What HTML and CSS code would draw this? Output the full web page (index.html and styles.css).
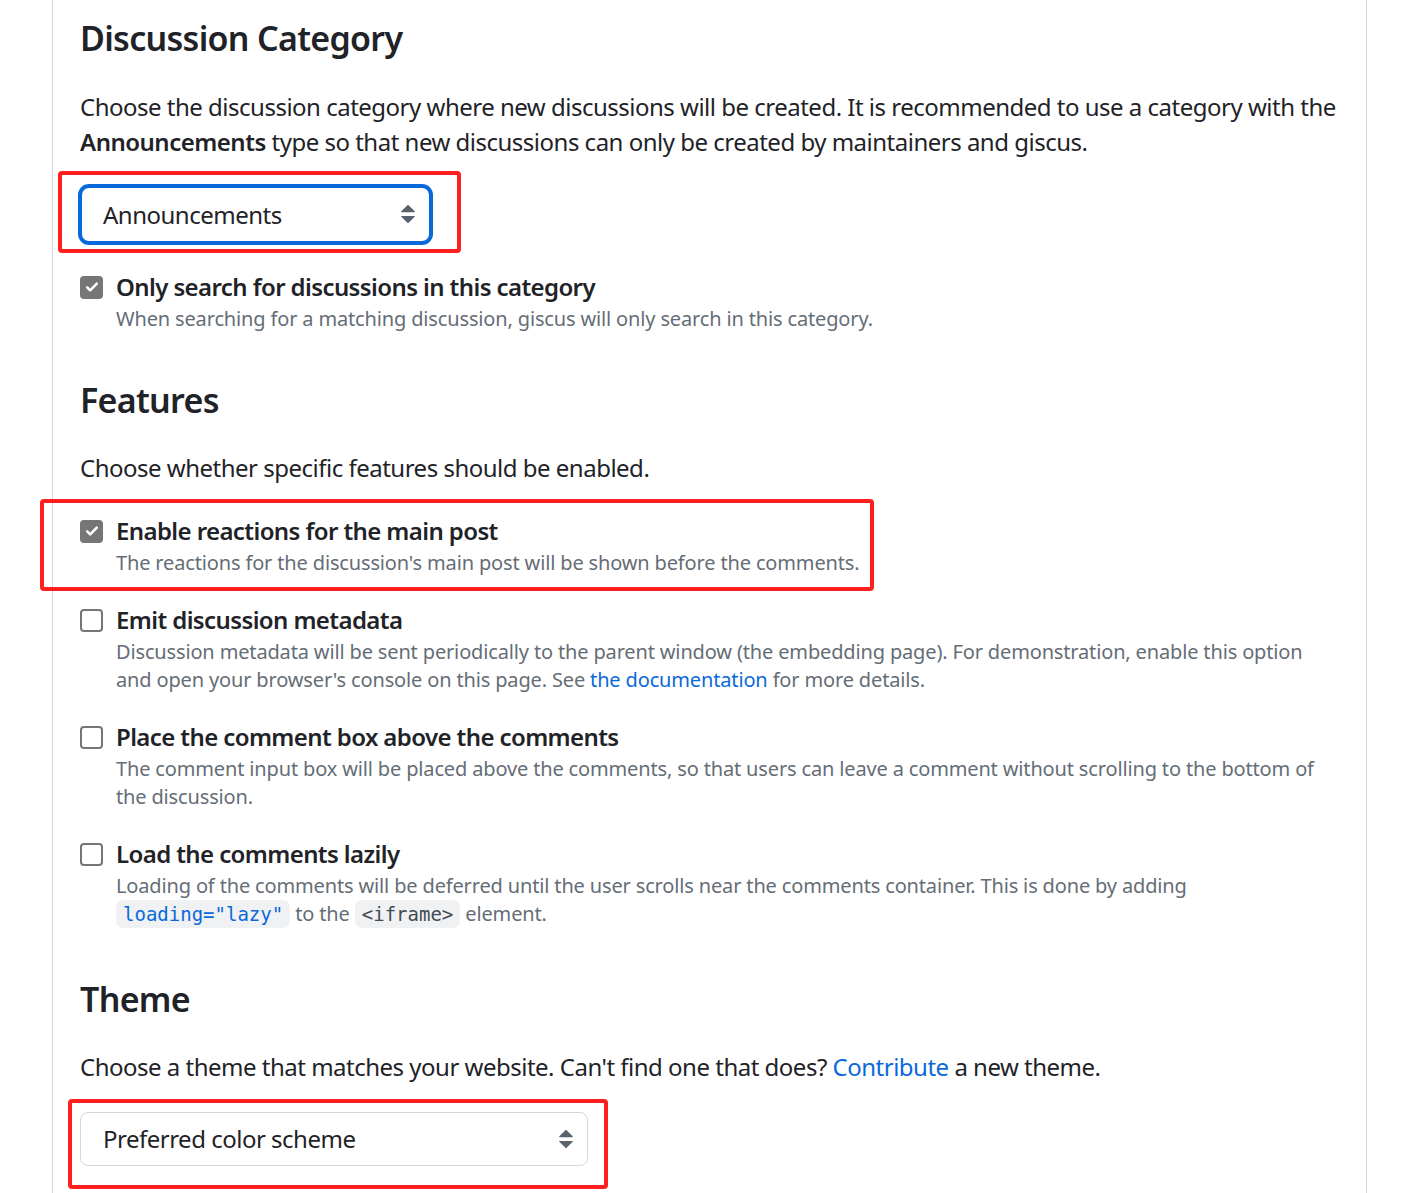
FILE: index.html
```html
<!DOCTYPE html>
<html lang="en">
<head>
<meta charset="utf-8">
<title>giscus configuration</title>
<link rel="stylesheet" href="styles.css">
</head>
<body>
<div class="page">
  <section class="sec">
    <h2 class="title">Discussion Category</h2>
    <p class="lead">Choose the discussion category where new discussions will be created. It is recommended to use a category with the <strong>Announcements</strong> type so that new discussions can only be created by maintainers and giscus.</p>
    <div class="select select-focus select-cat">
      <span class="select-text">Announcements</span>
      <svg class="chev" viewBox="0 0 16 16" width="30" height="30"><path d="M4.427 9.427l3.396 3.396a.25.25 0 00.354 0l3.396-3.396A.25.25 0 0011.396 9H4.604a.25.25 0 00-.177.427zM4.427 6.573l3.396-3.396a.25.25 0 01.354 0l3.396 3.396A.25.25 0 0111.396 7H4.604a.25.25 0 01-.177-.427z"/></svg>
    </div>
    <div class="opt opt-first">
      <span class="cb cb-on"><svg viewBox="0 0 16 16" width="16" height="16"><path d="M3.2 8.4l3 3 6.6-6.8" /></svg></span>
      <div class="opt-body">
        <div class="opt-label">Only search for discussions in this category</div>
        <div class="opt-desc">When searching for a matching discussion, giscus will only search in this category.</div>
      </div>
    </div>
  </section>

  <section class="sec sec-features">
    <h2 class="title">Features</h2>
    <p class="lead">Choose whether specific features should be enabled.</p>
    <div class="opts">
      <div class="opt">
        <span class="cb cb-on"><svg viewBox="0 0 16 16" width="16" height="16"><path d="M3.2 8.4l3 3 6.6-6.8" /></svg></span>
        <div class="opt-body">
          <div class="opt-label">Enable reactions for the main post</div>
          <div class="opt-desc">The reactions for the discussion's main post will be shown before the comments.</div>
        </div>
      </div>
      <div class="opt">
        <span class="cb"></span>
        <div class="opt-body">
          <div class="opt-label">Emit discussion metadata</div>
          <div class="opt-desc">Discussion metadata will be sent periodically to the parent window (the embedding page). For demonstration, enable this option and open your browser's console on this page. See <a href="#">the documentation</a> for more details.</div>
        </div>
      </div>
      <div class="opt">
        <span class="cb"></span>
        <div class="opt-body">
          <div class="opt-label">Place the comment box above the comments</div>
          <div class="opt-desc">The comment input box will be placed above the comments, so that users can leave a comment without scrolling to the bottom of the discussion.</div>
        </div>
      </div>
      <div class="opt">
        <span class="cb"></span>
        <div class="opt-body">
          <div class="opt-label">Load the comments lazily</div>
          <div class="opt-desc">Loading of the comments will be deferred until the user scrolls near the comments container. This is done by adding <code class="code code-blue">loading="lazy"</code> to the <code class="code">&lt;iframe&gt;</code> element.</div>
        </div>
      </div>
    </div>
  </section>

  <section class="sec sec-theme">
    <h2 class="title">Theme</h2>
    <p class="lead">Choose a theme that matches your website. Can't find one that does? <a href="#">Contribute</a> a new theme.</p>
    <div class="select select-theme">
      <span class="select-text">Preferred color scheme</span>
      <svg class="chev" viewBox="0 0 16 16" width="30" height="30"><path d="M4.427 9.427l3.396 3.396a.25.25 0 00.354 0l3.396-3.396A.25.25 0 0011.396 9H4.604a.25.25 0 00-.177.427zM4.427 6.573l3.396-3.396a.25.25 0 01.354 0l3.396 3.396A.25.25 0 0111.396 7H4.604a.25.25 0 01-.177-.427z"/></svg>
    </div>
  </section>
</div>

<div class="mark mark-1"></div>
<div class="mark mark-2"></div>
<div class="mark mark-3"></div>
</body>
</html>
```

FILE: styles.css
```css
* { box-sizing: border-box; }
html, body { margin: 0; background: #ffffff; }
body {
  position: relative;
  width: 1401px;
  height: 1193px;
  overflow: hidden;
  font-family: "Noto Sans", "Segoe UI", sans-serif;
  color: #1f2328;
}
.page {
  margin-left: 52px;
  width: 1315px;
  min-height: 1193px;
  border-left: 1px solid #d0d7de;
  border-right: 1px solid #d0d7de;
  padding: 17px 24px 0 27px;
}
.title {
  margin: 0;
  font-size: 34px;
  line-height: 42px;
  font-weight: 600;
  letter-spacing: -0.7px;
}
.lead {
  margin: 29.5px 0 0;
  font-size: 24px;
  line-height: 35px;
  letter-spacing: -0.5px;
}
.lead strong { font-weight: 600; }
a { color: #0969da; text-decoration: none; }

.sec-features { margin-top: 46px; }
.sec-theme { margin-top: 50px; }

.select {
  display: flex;
  align-items: center;
  justify-content: space-between;
  font-size: 24px;
  letter-spacing: -0.5px;
  background: #fff;
}
.select-cat {
  margin-top: 27px;
  width: 351px;
  height: 57px;
  border: 2px solid #0969da;
  border-radius: 9px;
  box-shadow: 0 0 0 2px #0969da;
  padding: 0 6px 0 21px;
}
.select-theme {
  margin-top: 27.5px;
  width: 508px;
  height: 54px;
  border: 1px solid #d0d7de;
  border-radius: 8px;
  padding: 0 6px 0 22px;
}
.chev { fill: #59636e; flex: none; }

.opts {
  display: flex;
  flex-direction: column;
  gap: 27px;
  margin-top: 29.5px;
}
.opt {
  display: flex;
  align-items: flex-start;
  gap: 13px;
}
.opt-first { margin-top: 28px; }
.cb {
  flex: none;
  width: 23px;
  height: 23px;
  margin-top: 5px;
  border: 2px solid #767676;
  border-radius: 4px;
  background: #fff;
  display: flex;
  align-items: center;
  justify-content: center;
}
.cb-on { background: #767676; }
.cb svg path { fill: none; stroke: #fff; stroke-width: 2.6; stroke-linecap: round; stroke-linejoin: round; }
.opt-body { min-width: 0; }
.opt-label {
  font-size: 24px;
  line-height: 32px;
  font-weight: 600;
  letter-spacing: -0.6px;
}
.opt-desc {
  margin-top: 2px;
  font-size: 20px;
  line-height: 28px;
  color: #656d76;
  letter-spacing: -0.15px;
}
.code {
  font-family: "DejaVu Sans Mono", "Liberation Mono", monospace;
  font-size: 19px;
  letter-spacing: 0;
  padding: 3px 7px;
  border-radius: 7px;
  background: #eff1f3;
  color: #424a53;
}
.code-blue { color: #0969da; }

.mark {
  position: absolute;
  border: 4px solid #ff1f1f;
  border-radius: 4px;
}
.mark-1 { left: 58px; top: 171px; width: 403px; height: 82px; }
.mark-2 { left: 40px; top: 499px; width: 834px; height: 92px; }
.mark-3 { left: 68px; top: 1099px; width: 540px; height: 90px; }
```
